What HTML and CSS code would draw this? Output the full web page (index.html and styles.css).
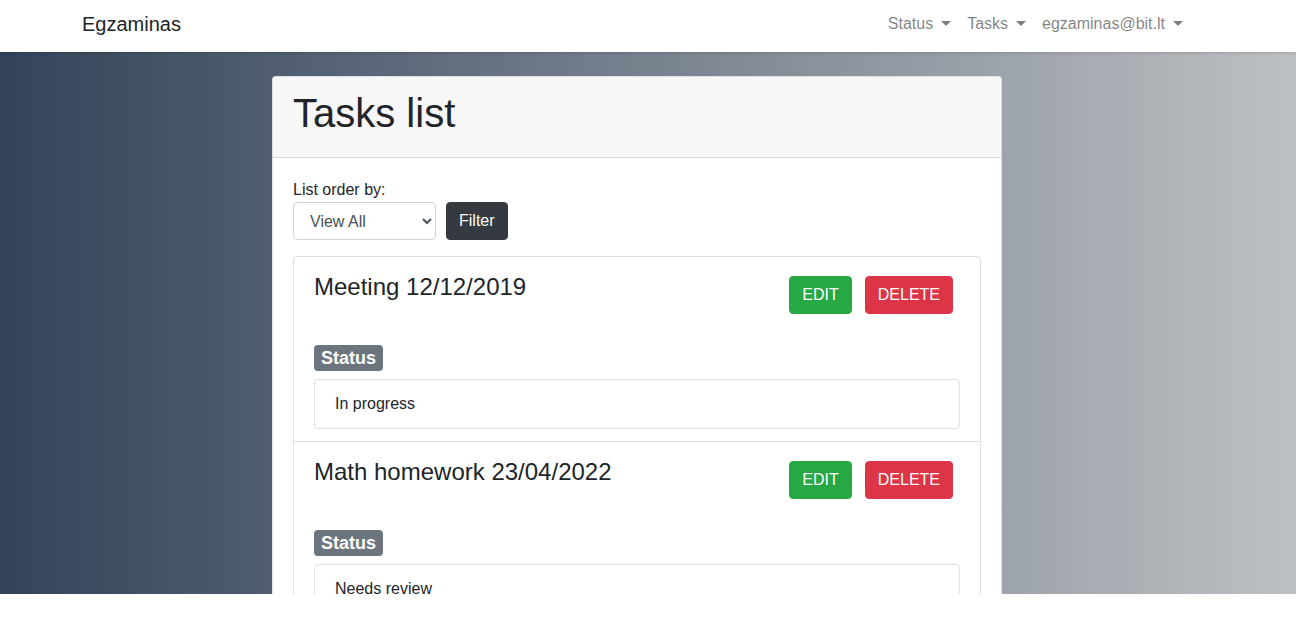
FILE: index.html
```html
<!DOCTYPE html>
<html lang="en">
<head>
<meta charset="utf-8">
<title>Tasks list</title>
<link rel="stylesheet" href="styles.css">
</head>
<body>
<nav class="navbar">
  <div class="nav-inner">
    <a class="brand" href="#">Egzaminas</a>
    <ul class="nav-links">
      <li><a href="#" class="dropdown">Status</a></li>
      <li><a href="#" class="dropdown">Tasks</a></li>
      <li><a href="#" class="dropdown">egzaminas@bit.lt</a></li>
    </ul>
  </div>
</nav>
<main class="page">
  <div class="card">
    <div class="card-header">
      <h1>Tasks list</h1>
    </div>
    <div class="card-body">
      <form class="filter">
        <label for="order">List order by:</label>
        <div class="filter-row">
          <select id="order" class="select">
            <option>View All</option>
          </select>
          <button type="button" class="btn btn-dark">Filter</button>
        </div>
      </form>
      <div class="task-list">
        <div class="task">
          <div class="task-head">
            <h4 class="task-title">Meeting 12/12/2019</h4>
            <div class="actions">
              <button type="button" class="btn btn-success">EDIT</button>
              <button type="button" class="btn btn-danger">DELETE</button>
            </div>
          </div>
          <span class="badge">Status</span>
          <div class="status-box">In progress</div>
        </div>
        <div class="task">
          <div class="task-head">
            <h4 class="task-title">Math homework 23/04/2022</h4>
            <div class="actions">
              <button type="button" class="btn btn-success">EDIT</button>
              <button type="button" class="btn btn-danger">DELETE</button>
            </div>
          </div>
          <span class="badge">Status</span>
          <div class="status-box">Needs review</div>
        </div>
      </div>
    </div>
  </div>
</main>
<div class="footer-space"></div>
</body>
</html>
```

FILE: styles.css
```css
* {
  box-sizing: border-box;
}

html, body {
  margin: 0;
  padding: 0;
}

body {
  font-family: "Liberation Sans", Arial, sans-serif;
  font-size: 16px;
  line-height: 1.5;
  color: #212529;
  background: #fff;
  overflow: hidden;
}

.navbar {
  height: 52px;
  background: #fff;
  position: relative;
  z-index: 2;
  box-shadow: 0 1px 3px rgba(0, 0, 0, 0.15);
}

.nav-inner {
  width: 1140px;
  margin: 0 auto;
  height: 100%;
  display: flex;
  align-items: center;
  padding-left: 4px;
}

.brand {
  font-size: 20px;
  color: #212529;
  text-decoration: none;
  line-height: 30px;
  margin-top: -5px;
}

.nav-links {
  list-style: none;
  margin: -4px 27px 0 auto;
  padding: 0;
  display: flex;
}

.nav-links a {
  display: block;
  padding: 0 8px;
  color: rgba(0, 0, 0, 0.5);
  text-decoration: none;
  line-height: 24px;
}

.dropdown::after {
  content: "";
  display: inline-block;
  margin-left: 8px;
  vertical-align: 3px;
  border-top: 5px solid;
  border-right: 5px solid transparent;
  border-left: 5px solid transparent;
}

.page {
  height: 542px;
  overflow: hidden;
  background: linear-gradient(to right, #33435a, #bdc0c3);
  padding: 24px 0 0 272px;
}

.footer-space {
  height: 27px;
  background: #fff;
}

.card {
  width: 730px;
  background: #fff;
  border: 1px solid rgba(0, 0, 0, 0.125);
  border-radius: 4px;
}

.card-header {
  background: #f7f7f7;
  border-bottom: 1px solid rgba(0, 0, 0, 0.125);
  padding: 12px 20px;
  border-radius: 3px 3px 0 0;
}

.card-header h1 {
  margin: 0 0 8px;
  font-size: 40px;
  font-weight: 500;
  line-height: 48px;
}

.card-body {
  padding: 20px;
}

.filter label {
  display: block;
  line-height: 24px;
}

.filter-row {
  display: flex;
  gap: 10px;
}

.select {
  width: 143px;
  height: 38px;
  padding: 0 8px 0 12px;
  font-family: inherit;
  font-size: 16px;
  color: #495057;
  background: #fff;
  border: 1px solid #ced4da;
  border-radius: 4px;
}

.btn {
  font-family: inherit;
  font-size: 16px;
  line-height: 24px;
  padding: 6px 12px;
  border: 1px solid transparent;
  border-radius: 4px;
  color: #fff;
  cursor: pointer;
}

.btn-dark {
  background: #343a40;
  border-color: #343a40;
}

.btn-success {
  background: #28a745;
  border-color: #28a745;
}

.btn-danger {
  background: #dc3545;
  border-color: #dc3545;
}

.task-list {
  margin-top: 16px;
}

.task {
  border: 1px solid rgba(0, 0, 0, 0.125);
  padding: 12px 20px;
}

.task + .task {
  border-top: 0;
}

.task:first-child {
  border-radius: 4px 4px 0 0;
}

.task-head {
  display: flex;
  justify-content: space-between;
  align-items: flex-start;
}

.task-title {
  margin: 4px 0 0;
  font-size: 24px;
  font-weight: 500;
  line-height: 28.8px;
}

.actions {
  display: flex;
  gap: 13px;
  margin: 7px 7px 0 0;
}

.badge {
  display: block;
  width: max-content;
  margin-top: 31px;
  padding: 4px 7px;
  font-size: 18px;
  font-weight: 700;
  line-height: 18px;
  color: #fff;
  background: #6c757d;
  border-radius: 4px;
}

.status-box {
  margin-top: 8px;
  border: 1px solid rgba(0, 0, 0, 0.125);
  border-radius: 4px;
  padding: 12px 20px;
  line-height: 24px;
}
```
